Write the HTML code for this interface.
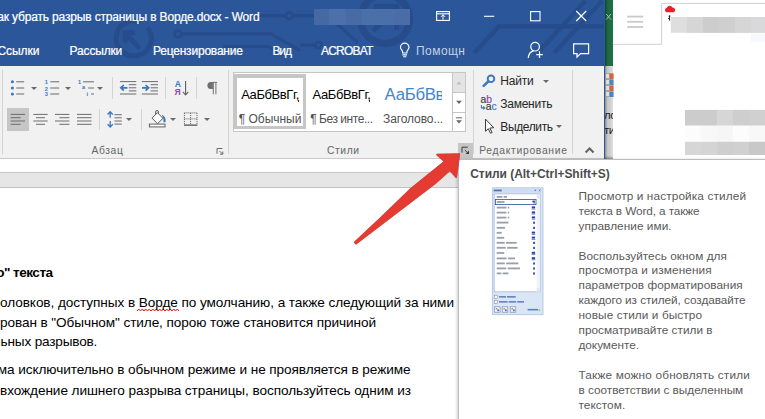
<!DOCTYPE html>
<html><head><meta charset="utf-8"><title>Word</title>
<style>
html,body{margin:0;padding:0;background:#fff;}
body{width:765px;height:419px;overflow:hidden;font-family:"Liberation Sans",sans-serif;}
#root{position:relative;width:765px;height:419px;overflow:hidden;background:#fff;}
.a{position:absolute;}
.t{position:absolute;white-space:nowrap;line-height:1;font-family:"Liberation Sans",sans-serif;}
svg{position:absolute;overflow:visible;}
#word{left:0;top:0;width:604.5px;height:419px;background:#fff;overflow:hidden;}
#titlebar{left:0;top:0;width:604.5px;height:65.5px;background:#2b579a;}
#ribbon{left:0;top:65.5px;width:604px;height:92.7px;background:#f1f1f1;border-bottom:1px solid #cacaca;}
#wedge{left:604px;top:0;width:1px;height:159px;background:#2b579a;}
#band{left:0;top:171.9px;width:604.5px;height:15.8px;background:#e6e6e6;border-top:1px solid #c8c8c8;border-bottom:1px solid #c4c4c4;box-sizing:border-box;}
.sep{position:absolute;width:1px;background:#d4d4d4;}
.dd{position:absolute;width:0;height:0;border-left:3px solid transparent;border-right:3px solid transparent;border-top:3.3px solid #6a6a6a;}
#tip{left:457.7px;top:158.8px;width:320px;height:270px;background:#fff;border:1px solid #bebebe;border-top-color:#bcbcbc;box-shadow:-1px -0.5px 3px rgba(0,0,0,.2);}

</style></head>
<body>
<div id="root">
<!-- right side background -->
<div class="a" style="left:613px;top:0;width:152px;height:419px;background:#fff;"></div>
<svg width="765" height="170" style="left:0;top:0">
  <!-- browser-ish tab lines -->
  <path d="M613 44.3 H661.6 V3.4 H765" fill="none" stroke="#d0d0d0" stroke-width="1"/>
  <rect x="627.2" y="15.7" width="16" height="1.8" fill="#c9c9c9"/>
  <rect x="627.2" y="20.9" width="16" height="1.8" fill="#c9c9c9"/>
  <rect x="627.2" y="26.1" width="16" height="1.8" fill="#c9c9c9"/>
  <!-- red cloud -->
  <path d="M666.5 12.2 a2.1 2.1 0 0 1 0.3 -4.1 a3 3 0 0 1 5.6 -0.6 a2.5 2.5 0 0 1 1.4 4.7 z" fill="#e8202a"/>
  <path d="M668.6 16.2 l1.6 0 M669.6 15.4 l0 5.2 M668.2 18.5 l1.2 0" stroke="#222" stroke-width="1" fill="none"/>
  <!-- blurred rects -->
  <rect x="670.8" y="17" width="95" height="15.8" fill="#dedede"/>
  <rect x="686.9" y="17" width="16.1" height="15.8" fill="#d6d6d6"/>
  <rect x="702.9" y="17" width="16.1" height="15.8" fill="#cdcdcd"/>
  <rect x="719" y="17" width="16" height="15.8" fill="#cfcfcf"/>
  <rect x="734.9" y="17" width="16.2" height="15.8" fill="#d6d6d6"/>
  <rect x="751.1" y="17" width="14" height="15.8" fill="#d9d9db"/>
  <rect x="751.1" y="33.6" width="14" height="8.2" fill="#f7f8fb"/>
  <rect x="685" y="109.9" width="16.1" height="15.899999999999999" fill="#cccccc"/>
  <rect x="700.8" y="109.9" width="16.6" height="15.899999999999999" fill="#cccccc"/>
  <rect x="717.1" y="109.9" width="16.1" height="15.899999999999999" fill="#d6d6d6"/>
  <rect x="732.9" y="109.9" width="16.4" height="15.899999999999999" fill="#cecece"/>
  <rect x="749" y="109.9" width="17.3" height="15.899999999999999" fill="#d0d0d0"/>
  <rect x="685" y="125.6" width="16.1" height="16.4" fill="#fcfcfc"/>
  <rect x="700.8" y="125.6" width="16.6" height="16.4" fill="#f8f8f8"/>
  <rect x="717.1" y="125.6" width="16.1" height="16.4" fill="#f6f6f6"/>
  <rect x="732.9" y="125.6" width="16.4" height="16.4" fill="#fcfcfc"/>
  <rect x="749" y="125.6" width="17.3" height="16.4" fill="#f8f8f8"/>
  <rect x="685" y="141.8" width="16.1" height="13.2" fill="#d6d6d6"/>
  <rect x="700.8" y="141.8" width="16.6" height="13.2" fill="#d4d4d4"/>
  <rect x="717.1" y="141.8" width="16.1" height="13.2" fill="#cecece"/>
  <rect x="732.9" y="141.8" width="16.4" height="13.2" fill="#d0d0d0"/>
  <rect x="749" y="141.8" width="17.3" height="13.2" fill="#c8c8c8"/>
</svg>

<!-- strip between windows -->
<div class="a" style="left:604.5px;top:0;width:8.5px;height:65.5px;background:linear-gradient(90deg,#134b2c 0%,#1c6a40 35%,#1f7044 100%);"></div>
<div class="a" style="left:604.5px;top:65.5px;width:8.5px;height:93px;background:linear-gradient(90deg,#8c8c8c 0%,#c4c4c4 30%,#dedede 100%);"></div>
<div class="a" style="left:604.5px;top:155.5px;width:8.5px;height:3.2px;background:linear-gradient(180deg,rgba(0,0,0,0),rgba(0,0,0,.32));"></div>
<svg width="10" height="160" style="left:604.5px;top:0">
  <path d="M1.2 14 L6 19.6 M6 14 L1.2 19.6" stroke="#9fbfae" stroke-width="1" fill="none"/>
  <g>
    <rect x="0.8" y="73.4" width="3.6" height="5.2" fill="#e0e0e0" stroke="#8a8a8a" stroke-width=".6"/>
    <rect x="4.6" y="73.4" width="4" height="5.6" fill="#d8643c"/>
    <rect x="0.8" y="79.4" width="3.6" height="5.2" fill="#e0e0e0" stroke="#8a8a8a" stroke-width=".6"/>
    <rect x="4.6" y="79.4" width="4" height="5.6" fill="#4a86c5"/>
    <rect x="0.8" y="85.4" width="3.6" height="5.2" fill="#e0e0e0" stroke="#8a8a8a" stroke-width=".6"/>
    <rect x="4.6" y="85.4" width="4" height="5.6" fill="#d8643c"/>
    <rect x="0.8" y="91.4" width="3.6" height="5.2" fill="#e0e0e0" stroke="#8a8a8a" stroke-width=".6"/>
    <rect x="4.6" y="91.4" width="4" height="5.6" fill="#4a86c5"/>
  </g>
</svg>
<div class="a" style="left:604.6px;top:107.6px;width:8.4px;height:32px;overflow:hidden;font-size:11.5px;color:#222;line-height:15.2px;letter-spacing:-0.6px;white-space:nowrap;"><div style="margin-left:-0.6px;">ло<br>ти</div></div>

<!-- WORD WINDOW -->
<div id="word" class="a">
  <div id="titlebar" class="a"></div>
  <svg width="605" height="66" style="left:0;top:0" id="pattern">
    <g fill="none" stroke="#264c8b">
      <path d="M147.6 27.6 A17.6 17.6 0 1 1 140.6 22.2" stroke-width="5"/>
      <path d="M139.8 48.4 L126 34 M125.2 42.4 V32.6 H135" stroke-width="4.8"/>
      <circle cx="177.8" cy="33.9" r="3.3" stroke-width="2.6"/>
      <path d="M181.4 33.9 H271 L300 50.5" stroke-width="3.2"/>
      <path d="M223 46.4 H268 L284 55" stroke-width="3.2"/>
      <path d="M236 15.7 H285.6" stroke-width="3.2"/>
      <circle cx="289.2" cy="15.7" r="3.3" stroke-width="2.6"/>
      <path d="M292.8 15.7 H328 L358 43" stroke-width="3.2"/>
      <circle cx="318.5" cy="45" r="3.3" stroke-width="2.6"/>
      <path d="M300 45 H314.9" stroke-width="3.2"/>
      <circle cx="385" cy="19" r="24.5" stroke-width="7"/>
      <path d="M374 6.3 H396.6 V30 M396 7 L373 31" stroke-width="5"/>
      <path d="M474 53 L499 26.2 H604" stroke-width="4.5"/>
      <path d="M537.5 53 L585.5 1" stroke-width="4.5"/>
      <path d="M554 53 L602 1" stroke-width="4.5"/>
    </g>
  </svg>
  <!-- blurred user name -->
  <div class="a" style="left:313.6px;top:8.8px;width:96.6px;height:16px;background:linear-gradient(90deg,#4668a3 0%,#4668a3 16%,#4c70aa 16%,#4c70aa 33%,#486ba6 33%,#486ba6 50%,#4b6fa9 50%,#4b6fa9 83%,#4a6da7 83%);"></div>

  <!-- window buttons -->
  <svg width="605" height="66" style="left:0;top:0">
    <g fill="none" stroke="#fff" stroke-width="1.1">
      <rect x="436.6" y="11.6" width="12.8" height="8.8"/>
      <path d="M436.6 13.8 H449.4" />
      <path d="M443 19.6 V14.8 M441 16.8 L443 14.8 L445 16.8" stroke-width="1"/>
      <path d="M484 16.3 H494.2"/>
      <rect x="530.6" y="11.6" width="9.4" height="9.2"/>
      <path d="M576.2 11 L586.2 21 M586.2 11 L576.2 21" stroke-width="1.15"/>
      <!-- lightbulb -->
      <path d="M402.6 53 V51.8 C402.6 50.2 400.5 49.4 400.5 47.4 A4.25 4.25 0 0 1 409 47.4 C409 49.4 406.9 50.2 406.9 51.8 V53 Z" stroke-width="1.15"/>
      <path d="M402.4 54.9 H407 M403.2 56.7 H406.3" stroke-width="1.1"/>
      <!-- share person -->
      <circle cx="535.1" cy="46.7" r="4.3" stroke-width="1.2"/>
      <path d="M528.2 57.8 C528.8 53.6 531 51.3 533.6 50.8" stroke-width="1.2"/>
      <path d="M539.5 51.3 V57.9 M536.2 54.6 H542.8" stroke-width="1.2"/>
      <!-- comment -->
      <path d="M573.6 43.8 H588.6 V53.6 H580.6 L577 57 V53.6 H573.6 Z" stroke-width="1.2"/>
    </g>
  </svg>

  <div id="ribbon" class="a"></div>
  <div id="wedge" class="a"></div>

  <!-- group separators -->
  <div class="sep" style="left:2.2px;top:70px;height:84px;"></div>
  <div class="sep" style="left:227.5px;top:70px;height:84px;"></div>
  <div class="sep" style="left:473.4px;top:70px;height:84px;"></div>
  <div class="sep" style="left:572px;top:70px;height:84px;"></div>
  <!-- small separators -->
  <div class="sep" style="left:112.3px;top:77px;height:22px;"></div>
  <div class="sep" style="left:165.3px;top:77px;height:22px;"></div>
  <div class="sep" style="left:196.3px;top:77px;height:22px;"></div>
  <div class="sep" style="left:99.3px;top:109px;height:21px;"></div>
  <div class="sep" style="left:141.4px;top:109px;height:21px;"></div>

  <!-- align-left highlighted -->
  <div class="a" style="left:6.8px;top:107.6px;width:22.3px;height:23.4px;background:#c6c6c6;"></div>

  <!-- dropdown arrows -->
  <div class="dd" style="left:31.7px;margin-left:-0.4px;top:86.8px;"></div>
  <div class="dd" style="left:65.5px;margin-left:-0.4px;top:86.8px;"></div>
  <div class="dd" style="left:97.6px;margin-left:-0.4px;top:86.8px;"></div>
  <div class="dd" style="left:126.8px;margin-left:-0.4px;top:118px;"></div>
  <div class="dd" style="left:170.8px;margin-left:-0.4px;top:118px;"></div>
  <div class="dd" style="left:204.8px;margin-left:-0.4px;top:118px;"></div>
  <div class="dd" style="left:543.6px;margin-left:-0.4px;top:79.6px;"></div>
  <div class="dd" style="left:556px;margin-left:-0.4px;top:124.6px;"></div>

  <!-- paragraph icons -->
  <svg width="240" height="100" style="left:0;top:65.5px" id="picons">
    <g transform="translate(0,-65.5)">
    <!-- bullets -->
    <g fill="#3b78bd"><circle cx="12.4" cy="81.3" r="1.55"/><circle cx="12.4" cy="87.5" r="1.55"/><circle cx="12.4" cy="93.5" r="1.55"/></g>
    <g stroke="#6a6a6a" stroke-width="1" fill="none">
      <path d="M16.2 81.3 H24.2 M16.2 87.5 H24.2 M16.2 93.5 H24.2"/>
      <!-- numbering lines -->
      <path d="M50.3 81.3 H59.2 M50.3 87.5 H59.2 M50.3 93.5 H59.2"/>
      <!-- multilevel lines -->
      <path d="M83.1 81.3 H94 M88.2 87.5 H94 M91 93.5 H94"/>
    </g>
    <g fill="#3b78bd" font-family="Liberation Sans, sans-serif" font-size="5.6" font-weight="bold">
      <text x="44.8" y="83.8">1</text><text x="44.8" y="90">2</text><text x="44.8" y="95.9">3</text>
      <text x="77.9" y="83.8">1</text><text x="82" y="88.9">a</text><text x="86.6" y="95.6">i</text>
    </g>
    <!-- decrease indent -->
    <g stroke="#6a6a6a" stroke-width="1" fill="none">
      <path d="M120 81.1 H136.3 M128.8 84.2 H136.3 M128.8 87.3 H136.3 M128.8 90.4 H136.3 M120 93.5 H136.3"/>
      <path d="M141.8 81.1 H158 M150.6 84.2 H158 M150.6 87.3 H158 M150.6 90.4 H158 M141.8 93.5 H158"/>
    </g>
    <g stroke="#3b78bd" stroke-width="1.7" fill="none">
      <path d="M127.4 87.3 H121 M123.8 84.5 L120.8 87.3 L123.8 90.1"/>
      <path d="M142 87.3 H148.4 M145.6 84.5 L148.6 87.3 L145.6 90.1"/>
    </g>
    <!-- sort -->
    <g font-family="Liberation Sans, sans-serif" font-size="8.6" font-weight="bold">
      <text x="174.7" y="86.6" fill="#3b78bd">A</text>
      <text x="174.6" y="94.9" fill="#8b4fa8">Я</text>
    </g>
    <path d="M185.6 80.4 V94.2 M182.9 91.4 L185.6 94.5 L188.3 91.4" stroke="#5e5e5e" stroke-width="1.1" fill="none"/>
    <!-- pilcrow -->
    <path d="M212.9 81.5 H210.9 A3.5 3.5 0 0 0 210.9 88.5 H212.9 Z" fill="#707070"/>
    <path d="M213.3 93.8 V81.9 M215.9 93.8 V81.9 M212.6 81.9 H217.2" stroke="#707070" stroke-width="1" fill="none"/>
    <!-- align icons -->
    <g stroke="#6c6c6c" stroke-width="1" fill="none">
      <path d="M10.6 113.9 H25 M10.6 117.2 H20.6 M10.6 120.5 H25 M10.6 123.8 H20.6"/>
      <path d="M33.3 113.9 H47.7 M36 117.2 H45 M33.3 120.5 H47.7 M36 123.8 H45"/>
      <path d="M55 113.9 H69.4 M59.4 117.2 H69.4 M55 120.5 H69.4 M59.4 123.8 H69.4"/>
      <path d="M77 113.9 H91.5 M77 117.2 H91.5 M77 120.5 H91.5 M77 123.8 H91.5"/>
      <!-- line spacing lines -->
      <path d="M114.4 114.2 H121.8 M114.4 117.3 H121.8 M114.4 120.5 H121.8 M114.4 123.6 H121.8"/>
    </g>
    <path d="M110.2 111.2 V117.2 M107.6 114 L110.2 111.2 L112.8 114 M110.2 120.6 V126.6 M107.6 123.8 L110.2 126.6 L112.8 123.8" stroke="#3b78bd" stroke-width="1.3" fill="none"/>
    <!-- shading bucket -->
    <g fill="none" stroke="#5e5e5e" stroke-width="1">
      <path d="M152 117.6 L157.4 112.2 L163 117.8 L157.6 123.2 Z" fill="#fff"/>
      <path d="M155.6 114 V111.4 A1.4 1.4 0 0 1 158.4 111.4 V113.2"/>
      <rect x="149.4" y="123.6" width="15.6" height="2.8" fill="#fff"/>
    </g>
    <path d="M161.6 114.2 C164.6 115 166 117.6 165.6 121.2 C165 122.4 163.6 122.2 163.4 120.8 C163.6 118.4 163.2 116.6 161.6 114.2 Z" fill="#3b78bd"/>
    <!-- borders -->
    <g stroke="#6a6a6a" stroke-width="1" fill="none">
      <path d="M184.4 112.4 H197 M184.4 118.4 H197 M184.4 112.4 V124.4 M190.6 112.4 V124.4 M197 112.4 V124.4" stroke-dasharray="1 1" stroke="#5a5a5a"/>
      <path d="M184 124.6 H197.4" stroke="#444" stroke-width="1.2"/>
    </g>
    <!-- dialog launcher (paragraph) -->
    <g stroke="#6a6a6a" stroke-width="1" fill="none">
      <path d="M217 153.2 V148 H222.4"/>
      <path d="M219.4 150.4 L222.6 153.6 M222.8 151 V153.7 H220"/>
    </g>
    </g>
  </svg>

  <!-- style gallery -->
  <div class="a" style="left:233.3px;top:72px;width:232.6px;height:59.7px;background:#fff;border:1px solid #c6c6c6;box-sizing:border-box;"></div>
  <div class="a" style="left:234px;top:73.6px;width:71.7px;height:55.7px;border-style:solid;border-color:#c6c6c6;border-width:4.3px 3.4px 3.9px 3.7px;box-sizing:border-box;background:#fff;"></div>
  <!-- red clipped marks after samples -->
  <div class="a" style="left:297.6px;top:99.6px;width:1.2px;height:2.4px;background:#8a1a1a;"></div>
  <div class="a" style="left:369px;top:99.6px;width:1.2px;height:2.4px;background:#8a1a1a;"></div>
  <!-- scroll column -->
  <div class="a" style="left:452px;top:72px;width:13.9px;height:59.7px;box-sizing:border-box;border:1px solid #c6c6c6;background:#fff;"></div>
  <div class="a" style="left:452px;top:72px;width:13.9px;height:21px;box-sizing:border-box;border:1px solid #c6c6c6;background:#e4e4e4;"></div>
  <div class="a" style="left:452px;top:111.9px;width:13.9px;height:1px;background:#c6c6c6;"></div>
  <svg width="14" height="60" style="left:452px;top:72px">
    <path d="M4.2 12.6 L7 9.5 L9.8 12.6 Z" fill="#bdbdbd"/>
    <path d="M4.1 28.8 L9.9 28.8 L7 32 Z" fill="#666"/>
    <path d="M3.9 45.8 H10.1" stroke="#666" stroke-width="1"/>
    <path d="M4.1 48.2 L9.9 48.2 L7 51.4 Z" fill="#666"/>
  </svg>
  <!-- styles dialog launcher highlighted -->
  <div class="a" style="left:458.2px;top:143px;width:14.8px;height:14.7px;background:#c6c6c6;"></div>
  <svg width="15" height="15" style="left:458.2px;top:143px">
    <g stroke="#3c3c3c" stroke-width="1" fill="none">
      <path d="M4 9.6 V4.2 H9.8"/>
      <path d="M6.8 7 L10 10.2"/>
    </g>
    <path d="M11 7.6 V11 H7.6 Z" fill="#3c3c3c"/>
  </svg>

  <!-- editing icons -->
  <svg width="130" height="100" style="left:474px;top:65.5px">
    <g transform="translate(-474,-65.5)">
      <circle cx="491" cy="78.3" r="3.3" fill="none" stroke="#3b78bd" stroke-width="1.9"/>
      <path d="M488.2 81 L483.6 85.4" stroke="#3b78bd" stroke-width="2.5" stroke-linecap="round"/>
      <g font-family="Liberation Sans, sans-serif" font-size="10.3" stroke-width=".18">
        <text x="480.6" y="102.7" fill="#3a3a3a" stroke="#3a3a3a">a</text><text x="486.3" y="102.7" fill="#8a4aa8" stroke="#8a4aa8">b</text>
        <text x="485.7" y="109.9" fill="#3a3a3a" stroke="#3a3a3a">a</text><text x="491.4" y="109.9" fill="#3b78bd" stroke="#3b78bd">c</text>
      </g>
      <path d="M481.4 104.6 V107.4 H484.6 M483.2 105.9 L484.8 107.4 L483.2 108.9" stroke="#3b78bd" stroke-width="1.1" fill="none"/>
      <path d="M485.5 118.6 V130.8 L488.3 128.2 L490.5 132.8 L492.1 132 L489.9 127.6 L493.7 127.2 Z" fill="#fff" stroke="#3c3c3c" stroke-width="1" stroke-linejoin="round"/>
      <!-- collapse chevron -->
      <path d="M585.6 152 L589.6 148 L593.6 152" stroke="#646464" stroke-width="2.1" fill="none"/>
    </g>
  </svg>

  <!-- doc area -->
  <div id="band" class="a"></div>
  <!-- spelling squiggle under Ворде -->
  <svg width="42" height="5" style="left:137.3px;top:307.8px"><path d="M0 3 l1.75 -2 l1.75 2 l1.75 -2 l1.75 2 l1.75 -2 l1.75 2 l1.75 -2 l1.75 2 l1.75 -2 l1.75 2 l1.75 -2 l1.75 2 l1.75 -2 l1.75 2 l1.75 -2 l1.75 2 l1.75 -2 l1.75 2 l1.75 -2 l1.75 2 l1.75 -2 l1.75 2 l1.75 -2 l1.75 2" fill="none" stroke="#f21414" stroke-width="1"/></svg>
</div>

<!-- TOOLTIP -->
<div id="tip" class="a"></div>
<svg width="60" height="132" style="left:490px;top:185px" id="thumb">
<g transform="translate(-490,-185)">
<rect x="492.6" y="187.8" width="50.4" height="126.9" fill="#dae5f5" stroke="#a9c1e6" stroke-width=".8"/>
<rect x="493" y="188.2" width="49.6" height="4.6" fill="#cfdcf1"/>
<rect x="493.8" y="189.6" width="8" height="1.7" fill="#3f5f9e" opacity=".85"/>
<path d="M534.2 189.8 h2.2 l-1.1 1.4 z" fill="#4a6db0"/><path d="M538.8 189.5 l1.7 1.7 m0 -1.7 l-1.7 1.7" stroke="#4a6db0" stroke-width=".6" fill="none"/>
<rect x="494.2" y="193.9" width="45.9" height="97.9" fill="#fff" stroke="#9db3d6" stroke-width=".7"/>
<rect x="536.6" y="194.4" width="3.2" height="97" fill="#f0f3f8"/>
<rect x="536.9" y="194.8" width="2.6" height="3.4" fill="#e2e6ee"/><rect x="536.9" y="287.8" width="2.6" height="3.4" fill="#e2e6ee"/>
<rect x="495.4" y="199.5" width="40.6" height="5.1" fill="#fff" stroke="#2d4f9e" stroke-width=".8"/>
<rect x="496.7" y="196.0" width="5.7" height="1.8" fill="#5a6272" opacity=".62"/>
<rect x="503.6" y="196.0" width="3.4" height="1.8" fill="#5a6272" opacity=".62"/>
<rect x="496.7" y="201.1" width="7.8" height="1.8" fill="#5a6272" opacity=".62"/>
<rect x="532.4" y="200.7" width="2.2" height="1.6" fill="#2a3fb0"/><rect x="533.6" y="200.7" width="1" height="3" fill="#2a3fb0"/>
<rect x="496.7" y="206.7" width="9.7" height="1.8" fill="#5a6272" opacity=".62"/>
<rect x="507.8" y="206.7" width="1.4" height="1.8" fill="#5a6272" opacity=".62"/>
<rect x="531.8" y="206.4" width="3.3" height="2" fill="#2a3fb0"/><rect x="531.6" y="208.8" width="3.7" height=".6" fill="#2a3fb0"/>
<rect x="496.7" y="211.7" width="9.7" height="1.8" fill="#5a6272" opacity=".62"/>
<rect x="507.8" y="211.7" width="1.4" height="1.8" fill="#5a6272" opacity=".62"/>
<rect x="531.8" y="211.4" width="3.3" height="2" fill="#2a3fb0"/><rect x="531.6" y="213.8" width="3.7" height=".6" fill="#2a3fb0"/>
<rect x="496.7" y="216.7" width="9.7" height="1.8" fill="#5a6272" opacity=".62"/>
<rect x="507.8" y="216.7" width="1.4" height="1.8" fill="#5a6272" opacity=".62"/>
<rect x="531.8" y="216.4" width="3.3" height="2" fill="#2a3fb0"/><rect x="531.6" y="218.8" width="3.7" height=".6" fill="#2a3fb0"/>
<rect x="496.7" y="221.7" width="11.7" height="1.8" fill="#5a6272" opacity=".62"/>
<rect x="533.2" y="221.6" width="1.7" height="2.2" fill="#2a3fb0"/>
<rect x="496.7" y="226.9" width="8.3" height="1.8" fill="#5a6272" opacity=".62"/>
<rect x="533.2" y="226.8" width="1.7" height="2.2" fill="#2a3fb0"/>
<rect x="496.7" y="231.9" width="5.0" height="1.8" fill="#5a6272" opacity=".62"/>
<rect x="531.8" y="231.6" width="3.3" height="2" fill="#2a3fb0"/><rect x="531.6" y="234.0" width="3.7" height=".6" fill="#2a3fb0"/>
<rect x="496.7" y="236.9" width="7.5" height="1.8" fill="#5a6272" opacity=".62"/>
<rect x="531.8" y="236.6" width="3.3" height="2" fill="#2a3fb0"/><rect x="531.6" y="239.0" width="3.7" height=".6" fill="#2a3fb0"/>
<rect x="496.7" y="241.9" width="8.0" height="1.8" fill="#5a6272" opacity=".62"/>
<rect x="506.0" y="241.9" width="10.7" height="1.8" fill="#5a6272" opacity=".62"/>
<rect x="533.2" y="241.8" width="1.7" height="2.2" fill="#2a3fb0"/>
<rect x="496.7" y="246.9" width="9.1" height="1.8" fill="#5a6272" opacity=".62"/>
<rect x="507.1" y="246.9" width="10.5" height="1.8" fill="#5a6272" opacity=".62"/>
<rect x="533.2" y="246.8" width="1.7" height="2.2" fill="#2a3fb0"/>
<rect x="496.7" y="252.1" width="7.5" height="1.8" fill="#5a6272" opacity=".62"/>
<rect x="531.8" y="251.8" width="3.3" height="2" fill="#2a3fb0"/><rect x="531.6" y="254.2" width="3.7" height=".6" fill="#2a3fb0"/>
<rect x="496.7" y="257.5" width="9.9" height="1.8" fill="#5a6272" opacity=".62"/>
<rect x="508.0" y="257.5" width="7.0" height="1.8" fill="#5a6272" opacity=".62"/>
<rect x="531.8" y="257.2" width="3.3" height="2" fill="#2a3fb0"/><rect x="531.6" y="259.6" width="3.7" height=".6" fill="#2a3fb0"/>
<rect x="496.7" y="262.5" width="8.1" height="1.8" fill="#5a6272" opacity=".62"/>
<rect x="506.2" y="262.5" width="12.2" height="1.8" fill="#5a6272" opacity=".62"/>
<rect x="533.2" y="262.4" width="1.7" height="2.2" fill="#2a3fb0"/>
<rect x="496.7" y="267.5" width="9.6" height="1.8" fill="#5a6272" opacity=".62"/>
<rect x="507.7" y="267.5" width="12.3" height="1.8" fill="#5a6272" opacity=".62"/>
<rect x="533.2" y="267.4" width="1.7" height="2.2" fill="#2a3fb0"/>
<rect x="496.7" y="272.5" width="4.7" height="1.8" fill="#5a6272" opacity=".62"/>
<rect x="502.6" y="272.5" width="5.8" height="1.8" fill="#5a6272" opacity=".62"/>
<rect x="533.2" y="272.4" width="1.7" height="2.2" fill="#2a3fb0"/>
<rect x="494.6" y="295.2" width="3" height="3.2" fill="#fff" stroke="#6d7f9e" stroke-width=".5"/>
<rect x="494.6" y="300.2" width="3" height="3.2" fill="#fff" stroke="#6d7f9e" stroke-width=".5"/>
<rect x="499" y="296.1" width="7" height="1.5" fill="#4668b8" opacity=".85"/><rect x="507" y="296.1" width="8.7" height="1.5" fill="#4668b8" opacity=".85"/>
<rect x="499" y="301.1" width="8.6" height="1.5" fill="#4668b8" opacity=".85"/><rect x="508.6" y="301.1" width="7.6" height="1.5" fill="#4668b8" opacity=".85"/><rect x="517.2" y="301.1" width="6.8" height="1.5" fill="#4668b8" opacity=".85"/>
<rect x="494.5" y="306.8" width="5.6" height="5.4" fill="#eef2f9" stroke="#6f84ad" stroke-width=".6"/>
<rect x="495.7" y="308" width="1.6" height="1.6" fill="#c89a3a"/><rect x="497.3" y="309.4" width="1.8" height="1.8" fill="#5b6fc0"/>
<rect x="502.2" y="306.8" width="5.6" height="5.4" fill="#eef2f9" stroke="#6f84ad" stroke-width=".6"/>
<rect x="503.4" y="308" width="1.6" height="1.6" fill="#c89a3a"/><rect x="505.0" y="309.4" width="1.8" height="1.8" fill="#5b6fc0"/>
<rect x="510.2" y="306.8" width="5.6" height="5.4" fill="#eef2f9" stroke="#6f84ad" stroke-width=".6"/>
<rect x="511.4" y="308" width="1.6" height="1.6" fill="#c89a3a"/><rect x="513.0" y="309.4" width="1.8" height="1.8" fill="#5b6fc0"/>
<rect x="527.6" y="308.9" width="10.4" height="1.5" fill="#3f6fd6" opacity=".9"/><rect x="538.4" y="309.7" width="1.8" height=".7" fill="#3f6fd6"/>
</g></svg>

<!-- ARROW -->
<svg width="765" height="419" style="left:0;top:0;pointer-events:none;filter:drop-shadow(0.8px 0.8px 0.7px rgba(0,0,0,.28));" id="arrow">
  <path d="M354.7 242.3 L381.1 217.5 L411.1 188.6 L444.8 161.5 L437 154.7 L459.3 154.2 L456.2 177.2 L449.9 170.1 L434.8 183.5 L356.1 243.6 Z" fill="#e43b32" stroke="#e43b32" stroke-width="1.7" stroke-linejoin="round"/>
</svg>

<span class="t" id="t0" style="top:11.00px;font-size:12px;color:#ffffff;letter-spacing:-0.159px;right:505.56px;-webkit-text-stroke:0.22px #fff;">ак убрать разрыв страницы в Ворде.docx - Word</span>
<span class="t" id="t1" style="top:45.00px;font-size:12px;color:#ffffff;letter-spacing:-0.050px;left:-2.60px;-webkit-text-stroke:0.22px #fff;">Ссылки</span>
<span class="t" id="t2" style="top:45.00px;font-size:12px;color:#ffffff;letter-spacing:-0.166px;left:69.60px;-webkit-text-stroke:0.22px #fff;">Рассылки</span>
<span class="t" id="t3" style="top:45.00px;font-size:12px;color:#ffffff;letter-spacing:-0.198px;left:152.90px;-webkit-text-stroke:0.22px #fff;">Рецензирование</span>
<span class="t" id="t4" style="top:45.00px;font-size:12px;color:#ffffff;letter-spacing:-1.109px;left:272.40px;-webkit-text-stroke:0.22px #fff;">Вид</span>
<span class="t" id="t5" style="top:45.00px;font-size:12px;color:#ffffff;letter-spacing:-0.804px;left:321.00px;-webkit-text-stroke:0.22px #fff;">ACROBAT</span>
<span class="t" id="t6" style="top:45.00px;font-size:12px;color:#c3d0e6;letter-spacing:0.453px;left:416.00px;">Помощн</span>
<span class="t" id="t7" style="top:146.00px;font-size:10.3px;color:#666666;letter-spacing:0.602px;left:91.50px;">Абзац</span>
<span class="t" id="t8" style="top:146.00px;font-size:10.3px;color:#666666;letter-spacing:0.582px;left:327.00px;">Стили</span>
<span class="t" id="t9" style="top:146.00px;font-size:10.3px;color:#666666;letter-spacing:0.719px;left:479.20px;">Редактирование</span>
<span class="t" id="t10" style="top:88.00px;font-size:13px;color:#000;letter-spacing:-0.403px;left:241.20px;">АаБбВвГг,</span>
<span class="t" id="t11" style="top:113.00px;font-size:12px;color:#505050;letter-spacing:-0.029px;left:238.80px;">¶ Обычный</span>
<span class="t" id="t12" style="top:88.00px;font-size:13px;color:#000;letter-spacing:-0.403px;left:312.60px;">АаБбВвГг,</span>
<span class="t" id="t13" style="top:113.00px;font-size:12px;color:#505050;letter-spacing:-0.457px;left:310.20px;">¶ Без инте...</span>
<div class="a" style="left:380px;top:0;width:61.80000000000001px;height:419px;overflow:hidden;"><span class="t" id="t14" style="top:87.00px;font-size:16.8px;color:#4485c8;letter-spacing:-0.312px;left:4.60px;">АаБбВвГг</span></div>
<span class="t" id="t15" style="top:113.00px;font-size:12px;color:#505050;letter-spacing:-0.097px;left:383.00px;">Заголово...</span>
<span class="t" id="t16" style="top:75.00px;font-size:12px;color:#262626;letter-spacing:-0.188px;left:500.30px;">Найти</span>
<span class="t" id="t17" style="top:98.00px;font-size:12px;color:#262626;letter-spacing:-0.263px;left:500.30px;">Заменить</span>
<span class="t" id="t18" style="top:121.00px;font-size:12px;color:#262626;letter-spacing:-0.380px;left:500.30px;">Выделить</span>
<span class="t" id="t19" style="top:266.00px;font-size:13.6px;color:#000;letter-spacing:-0.521px;font-weight:bold;right:712.42px;">о" текста</span>
<span class="t" id="t20" style="top:296.00px;font-size:13.6px;color:#000;letter-spacing:-0.069px;left:0.00px;">оловков, доступных в Ворде по умолчанию, а также следующий за ними</span>
<span class="t" id="t21" style="top:316.00px;font-size:13.6px;color:#000;letter-spacing:-0.090px;left:0.00px;">рован в "Обычном" стиле, порою тоже становится причиной</span>
<span class="t" id="t22" style="top:335.00px;font-size:13.6px;color:#000;letter-spacing:-0.176px;left:0.60px;">ьных разрывов.</span>
<span class="t" id="t23" style="top:363.00px;font-size:13.6px;color:#000;letter-spacing:-0.081px;right:354.58px;">ма исключительно в обычном режиме и не проявляется в режиме</span>
<span class="t" id="t24" style="top:384.00px;font-size:13.6px;color:#000;letter-spacing:-0.073px;left:0.00px;">вхождение лишнего разрыва страницы, воспользуйтесь одним из</span>
<span class="t" id="t25" style="top:168.00px;font-size:12px;color:#4c4c4c;letter-spacing:-0.044px;font-weight:bold;left:470.20px;">Стили (Alt+Ctrl+Shift+S)</span>
<span class="t" id="t26" style="top:191.00px;font-size:11.8px;color:#5a5a5a;letter-spacing:0.123px;left:578.50px;">Просмотр и настройка стилей</span>
<span class="t" id="t27" style="top:206.00px;font-size:11.8px;color:#5a5a5a;letter-spacing:-0.110px;left:578.50px;">текста в Word, а также</span>
<span class="t" id="t28" style="top:221.00px;font-size:11.8px;color:#5a5a5a;letter-spacing:0.053px;left:578.50px;">управление ими.</span>
<span class="t" id="t29" style="top:251.00px;font-size:11.8px;color:#5a5a5a;letter-spacing:0.047px;left:578.50px;">Воспользуйтесь окном для</span>
<span class="t" id="t30" style="top:265.00px;font-size:11.8px;color:#5a5a5a;letter-spacing:0.123px;left:578.50px;">просмотра и изменения</span>
<span class="t" id="t31" style="top:280.00px;font-size:11.8px;color:#5a5a5a;letter-spacing:0.051px;left:578.50px;">параметров форматирования</span>
<span class="t" id="t32" style="top:295.00px;font-size:11.8px;color:#5a5a5a;letter-spacing:-0.076px;left:578.50px;">каждого из стилей, создавайте</span>
<span class="t" id="t33" style="top:310.00px;font-size:11.8px;color:#5a5a5a;letter-spacing:0.087px;left:578.50px;">новые стили и быстро</span>
<span class="t" id="t34" style="top:325.00px;font-size:11.8px;color:#5a5a5a;letter-spacing:0.020px;left:578.50px;">просматривайте стили в</span>
<span class="t" id="t35" style="top:340.00px;font-size:11.8px;color:#5a5a5a;letter-spacing:-0.035px;left:578.50px;">документе.</span>
<span class="t" id="t36" style="top:370.00px;font-size:11.8px;color:#5a5a5a;letter-spacing:0.174px;left:578.50px;">Также можно обновлять стили</span>
<span class="t" id="t37" style="top:385.00px;font-size:11.8px;color:#5a5a5a;letter-spacing:-0.030px;left:578.50px;">в соответствии с выделенным</span>
<span class="t" id="t38" style="top:400.00px;font-size:11.8px;color:#5a5a5a;letter-spacing:0.064px;left:578.50px;">текстом.</span>
</div>
</body></html>
